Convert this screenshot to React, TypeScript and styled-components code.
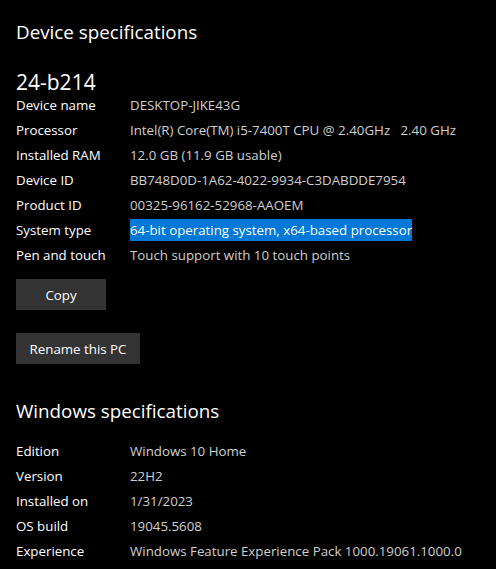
import React from "react";
import styled, { createGlobalStyle } from "styled-components";

const Global = createGlobalStyle`
  html, body { margin: 0; padding: 0; background: #000; }
  body { font-family: "Open Sans", "Noto Sans", sans-serif; color: #fff; }
`;

const Page = styled.div`
  width: 496px;
  height: 569px;
  background: #000;
  padding: 0 16px;
  box-sizing: border-box;
  overflow: hidden;
  display: flex;
  flex-direction: column;
`;

const SectionTitle = styled.h2<{ $top: number; $bottom: number }>`
  margin: ${(p) => p.$top}px 0 ${(p) => p.$bottom}px;
  font-size: 18.8px;
  font-weight: 400;
  line-height: 28px;
  color: #fff;
`;

const ModelName = styled.div`
  font-size: 21px;
  line-height: 28px;
  color: #fff;
  margin-bottom: -4px;
`;

const SpecList = styled.div`
  display: grid;
  grid-template-columns: 114px 1fr;
  grid-auto-rows: 25px;
  align-items: center;
  font-size: 13.3px;
`;

const Label = styled.div`
  color: #fff;
  white-space: nowrap;
`;

const Value = styled.div`
  color: #cfcfcf;
  white-space: pre;
`;

const Selected = styled.span`
  background: #0078d7;
  color: #fff;
  padding: 2px 0 2px;
`;

const Button = styled.button<{ $width: number; $top: number }>`
  width: ${(p) => p.$width}px;
  height: 31px;
  margin-top: ${(p) => p.$top}px;
  background: #333;
  border: none;
  color: #fff;
  font-family: inherit;
  font-size: 13.3px;
  padding: 0;
  align-self: flex-start;
`;

const device: [string, React.ReactNode][] = [
  ["Device name", "DESKTOP-JIKE43G"],
  ["Processor", "Intel(R) Core(TM) i5-7400T CPU @ 2.40GHz   2.40 GHz"],
  ["Installed RAM", "12.0 GB (11.9 GB usable)"],
  ["Device ID", "BB748D0D-1A62-4022-9934-C3DABDDE7954"],
  ["Product ID", "00325-96162-52968-AAOEM"],
  ["System type", <Selected>64-bit operating system, x64-based processor</Selected>],
  ["Pen and touch", "Touch support with 10 touch points"],
];

const windows: [string, string][] = [
  ["Edition", "Windows 10 Home"],
  ["Version", "22H2"],
  ["Installed on", "1/31/2023"],
  ["OS build", "19045.5608"],
  ["Experience", "Windows Feature Experience Pack 1000.19061.1000.0"],
];

export default function App() {
  return (
    <Page>
      <Global />
      <SectionTitle $top={18} $bottom={22}>Device specifications</SectionTitle>
      <ModelName>24-b214</ModelName>
      <SpecList>
        {device.map(([k, v]) => (
          <React.Fragment key={k}>
            <Label>{k}</Label>
            <Value>{v}</Value>
          </React.Fragment>
        ))}
      </SpecList>
      <Button $width={90} $top={12}>Copy</Button>
      <Button $width={124} $top={23}>Rename this PC</Button>
      <SectionTitle $top={33} $bottom={13}>Windows specifications</SectionTitle>
      <SpecList>
        {windows.map(([k, v]) => (
          <React.Fragment key={k}>
            <Label>{k}</Label>
            <Value>{v}</Value>
          </React.Fragment>
        ))}
      </SpecList>
    </Page>
  );
}
